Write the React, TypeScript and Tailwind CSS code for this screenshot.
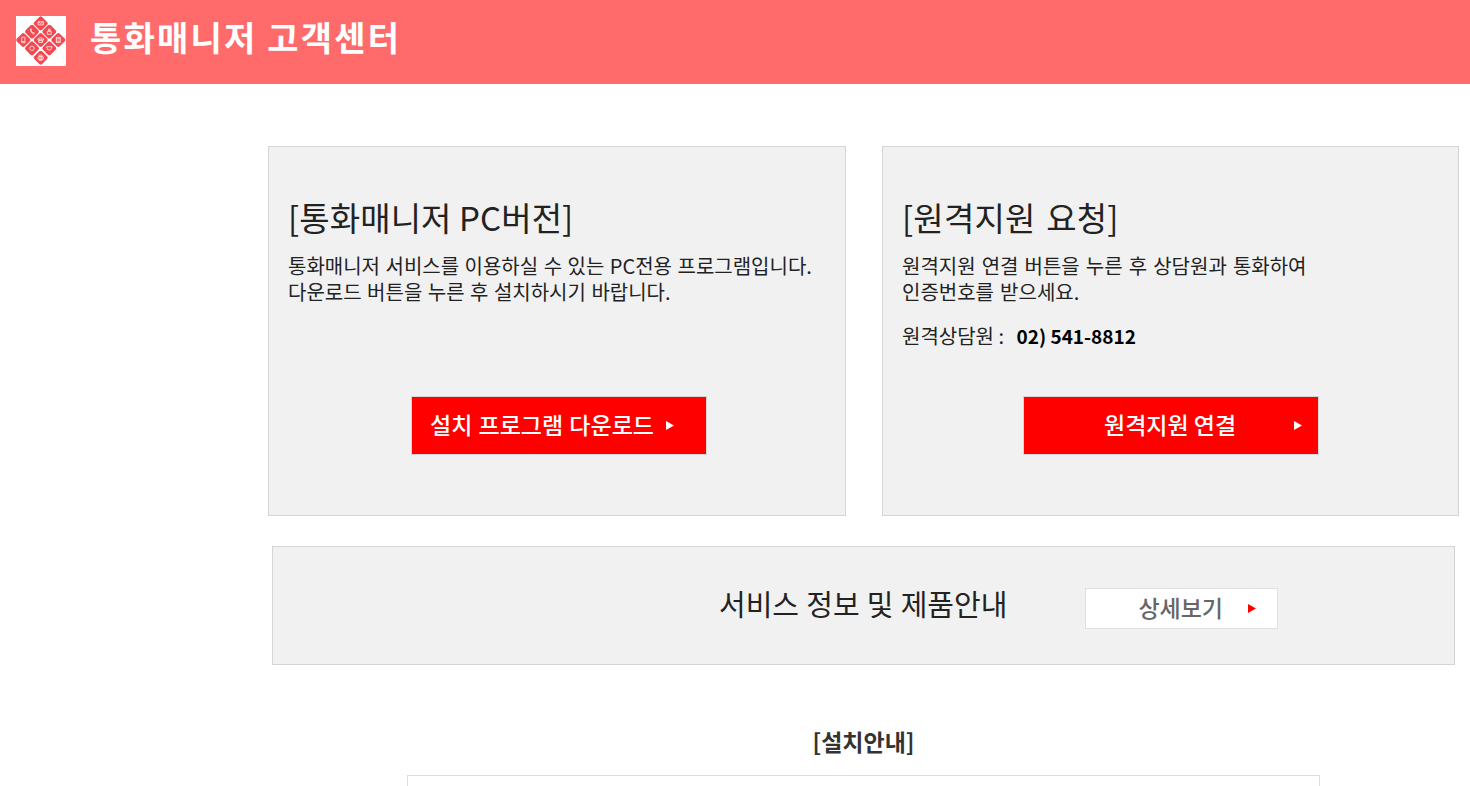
const cells: [number, number, string][] = [
  // top: envelope
  [24.7, 7.3, "M-2.6-1.6H2.6V1.6H-2.6ZM-2.6-1.6L0 .4L2.6-1.6"],
  // upper left: handset
  [16, 15.7, "M-1.6-2.6C-1.6 0 0 2 1.8 2.6L2.4 1.4L.9 .5L.2 1C-.4 .3-.7-.4-.8-1.1L-.1-1.7L-.8-3Z"],
  // upper right: person
  [33.3, 15.7, "M-.9-2.6H.9V-.9H-.9ZM-2-.1H2V2.6H-2Z"],
  // left: mobile
  [7.3, 24, "M-1.6-2.8H1.6V2.8H-1.6ZM-1.6 1.5H1.6"],
  // center: telephone
  [24.7, 24, "M-2.8-1.2C-1.5-2.6 1.5-2.6 2.8-1.2V.1H1.2V-.8H-1.2V.1H-2.8ZM-1.9.6H1.9V2.4H-1.9Z"],
  // right: tablet
  [42.3, 24, "M-2-2.6H2V2.6H-2ZM-2-1.2H2M-2 1.2H2"],
  // lower left: disc
  [16, 32.3, "M-2.2 0A2.2 2.2 0 1 0 2.2 0A2.2 2.2 0 1 0-2.2 0Z"],
  // lower right: cup
  [33.3, 32.3, "M-2.8-1.6H2.8L1.4 1.6H-1.4Z"],
  // bottom: printer
  [24.7, 41.7, "M-1.4-2.6H1.4V-.8H-1.4ZM-2.6-.8H2.6V1.4H-2.6ZM-1.4 1.4H1.4V2.6H-1.4Z"],
];

function Logo() {
  return (
    <div className="h-[50px] w-[50px] shrink-0 bg-white">
      <svg viewBox="0 0 50 50" className="h-full w-full">
        {cells.map(([x, y, d], i) => (
          <g key={i} transform={`translate(${x} ${y})`}>
            <rect x="-5.5" y="-5.5" width="11" height="11" rx="2" fill="#ef4a52" transform="rotate(45)" />
            <path d={d} fill="none" stroke="#fff" strokeWidth="0.8" opacity="0.9" />
          </g>
        ))}
      </svg>
    </div>
  );
}

function Triangle({ color }: { color: string }) {
  return (
    <svg viewBox="0 0 8 9" className="h-[9px] w-2 shrink-0">
      <path d="M0 0L8 4.5L0 9Z" fill={color} />
    </svg>
  );
}

export default function App() {
  return (
    <div className="h-screen overflow-hidden bg-white font-['Noto_Sans_CJK_KR','Liberation_Sans',sans-serif]">
      <header className="flex h-[84px] items-start bg-[#ff6b6b] pt-4 pl-4">
        <Logo />
        <h1 className="mt-[-4px] ml-6 text-[34px] leading-[50px] font-bold tracking-[2.2px] text-white">통화매니저 고객센터</h1>
      </header>

      <main className="pt-[62px] pl-[268px] pr-[11px]">
        <div className="grid grid-cols-[578px_577px] gap-x-9">
          <section className="h-[370px] border border-[#d5d5d5] bg-[#f1f1f1] pt-[50px] pl-[19px]">
            <h2 className="text-[33px] leading-[40px] font-normal tracking-[0.1px] text-[#222]">[통화매니저 PC버전]</h2>
            <p className="mt-4 text-[20px] leading-[26px] [word-spacing:1px] text-[#222]">
              통화매니저 서비스를 이용하실 수 있는 PC전용 프로그램입니다.
              <br />
              다운로드 버튼을 누른 후 설치하시기 바랍니다.
            </p>
            <a className="mt-[91px] ml-[123px] flex h-[59px] w-[296px] items-center border border-[#d5d5d5] bg-[#ff0000] pb-[2px] pl-[18px] text-[23px] font-medium [word-spacing:1px] text-white">
              설치 프로그램 다운로드
              <span className="ml-3 pt-[2px]"><Triangle color="#fff" /></span>
            </a>
          </section>

          <section className="h-[370px] border border-[#d5d5d5] bg-[#f1f1f1] pt-[50px] pl-[19px]">
            <h2 className="text-[33px] leading-[40px] font-normal tracking-[0.2px] [word-spacing:3px] text-[#222]">[원격지원 요청]</h2>
            <p className="mt-4 text-[20px] leading-[26px] [word-spacing:1.6px] text-[#222]">
              원격지원 연결 버튼을 누른 후 상담원과 통화하여
              <br />
              인증번호를 받으세요.
            </p>
            <p className="mt-[18px] text-[20px] leading-[26px] text-[#222]">
              원격상담원 : <b className="ml-2 text-[19px] font-semibold text-black">02) 541-8812</b>
            </p>
            <a className="mt-[47px] ml-[121px] flex h-[59px] w-[296px] items-center justify-between border border-[#d5d5d5] bg-[#ff0000] pr-4 pb-[2px] pl-[80px] text-[23px] font-medium text-white">
              원격지원 연결
              <span className="pt-[2px]"><Triangle color="#fff" /></span>
            </a>
          </section>
        </div>

        <section className="mx-1 mt-[30px] flex h-[119px] items-center border border-[#d5d5d5] bg-[#f1f1f1] pl-[446px]">
          <span className="mb-[3px] text-[29px] [word-spacing:0.7px] text-[#222]">서비스 정보 및 제품안내</span>
          <a className="mt-[6px] ml-[78px] flex h-[41px] w-[193px] items-center border border-[#e0e0e0] bg-white pb-[2px] pl-[52px] text-[23px] font-medium text-[#666]">
            상세보기
            <span className="ml-[25px] pt-[2px]"><Triangle color="#ff0000" /></span>
          </a>
        </section>

        <h3 className="mt-[58px] text-center text-[23px] leading-[36px] font-bold text-[#333]">[설치안내]</h3>
        <div className="mx-auto mt-4 h-[300px] w-[913px] border border-[#ddd] bg-white"></div>
      </main>
    </div>
  );
}
